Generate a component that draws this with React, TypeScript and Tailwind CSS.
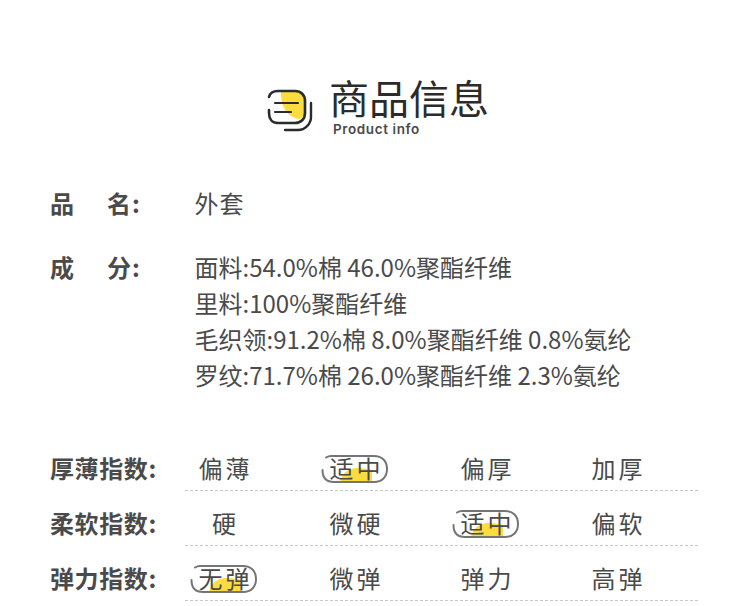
const font = "font-['Noto_Sans_CJK_SC','Noto_Sans',sans-serif]";

const indexRows = [
  { label: '厚薄指数:', options: ['偏薄', '适中', '偏厚', '加厚'], active: 1 },
  { label: '柔软指数:', options: ['硬', '微硬', '适中', '偏软'], active: 2 },
  { label: '弹力指数:', options: ['无弹', '微弹', '弹力', '高弹'], active: 0 },
];

function Badge() {
  return (
    <svg className="absolute left-1/2 top-0 -ml-[34px]" width="68" height="30" viewBox="0 0 68 30" fill="none">
      <path d="M19 28C21 19 27 15 35 14C42 14 48 15 51 16V28Z" fill="#fddc3f" />
      <path d="M5 3.500C7 2.300 8 2 10 2H53C61 2 66 7 66 15C66 23 61 28 53 28H13C6 28 1.500 24 1.500 16" stroke="#757575" strokeWidth="2" strokeLinecap="round" />
    </svg>
  );
}

function TitleIcon() {
  return (
    <svg width="52" height="50" viewBox="0 0 52 50" fill="none" className="mr-[14px]">
      <path d="M18 7H32C38 7 42 11 42 17V27C42 31 40 34 36 35C27 34 17 25 18 7Z" fill="#fddc3f" />
      <path d="M6 13C7 9 10 7 15 7H32C38 7 42 11 42 17V29C42 35 38 39 32 39H15C9 39 6 35 6 29V26" stroke="#2b2b2b" strokeWidth="2.600" strokeLinecap="round" />
      <path d="M12 19H35M12 28H28" stroke="#2b2b2b" strokeWidth="2.200" strokeLinecap="round" />
      <path d="M48 19V33C48 40 42 46 35 46H22" stroke="#2b2b2b" strokeWidth="2.400" strokeLinecap="round" />
    </svg>
  );
}

export default function App() {
  return (
    <div className={`${font} w-[750px] h-[606px] overflow-hidden bg-white text-[#4a4a4a]`}>
      <div className="flex justify-center items-start pl-[2px] pt-[71px] h-[179px]">
        <div className="pt-[13px]"><TitleIcon /></div>
        <div>
          <div className="mt-[6px] text-[40px] leading-[40px] text-[#2b2b2b]">商品信息</div>
          <div className="mt-[4px] ml-[4px] text-[13.500px] leading-[16px] font-semibold tracking-[0.6px] font-['Inter',sans-serif]">Product info</div>
        </div>
      </div>

      <div className="flex pl-[50px] pt-[6px] text-[24px] leading-[36px]">
        <div className="w-[144.500px] font-bold flex"><span className="w-[57px]">品</span><span className="tracking-[1px]">名:</span></div>
        <div className="tracking-[1px]">外套</div>
      </div>

      <div className="flex pl-[50px] pt-[28px] text-[24px] leading-[36px]">
        <div className="w-[144.500px] font-bold flex"><span className="w-[57px]">成</span><span className="tracking-[1px]">分:</span></div>
        <div>
          <div>面料:54.0%棉 46.0%聚酯纤维</div>
          <div>里料:100%聚酯纤维</div>
          <div>毛织领:91.2%棉 8.0%聚酯纤维 0.8%氨纶</div>
          <div>罗纹:71.7%棉 26.0%聚酯纤维 2.3%氨纶</div>
        </div>
      </div>

      <div className="pl-[50px] pt-[43px]">
        {indexRows.map((row) => (
          <div key={row.label} className="flex h-[55px] text-[24px]">
            <div className="w-[135px] font-bold leading-[40px] pt-[12px] tracking-[0.6px]">{row.label}</div>
            <div className="w-[513px] flex gap-[53px] border-b border-dashed border-[#c8c8c8] leading-[40px]">
              {row.options.map((opt, i) => (
                <div key={opt + i} className="relative w-[78px] h-[54px] text-center tracking-[3px] pt-[12px] pl-[3px]">
                  {i === row.active && <div className="absolute inset-x-0 top-[18px] h-[30px]"><Badge /></div>}
                  <span className="relative">{opt}</span>
                </div>
              ))}
            </div>
          </div>
        ))}
      </div>
    </div>
  );
}
